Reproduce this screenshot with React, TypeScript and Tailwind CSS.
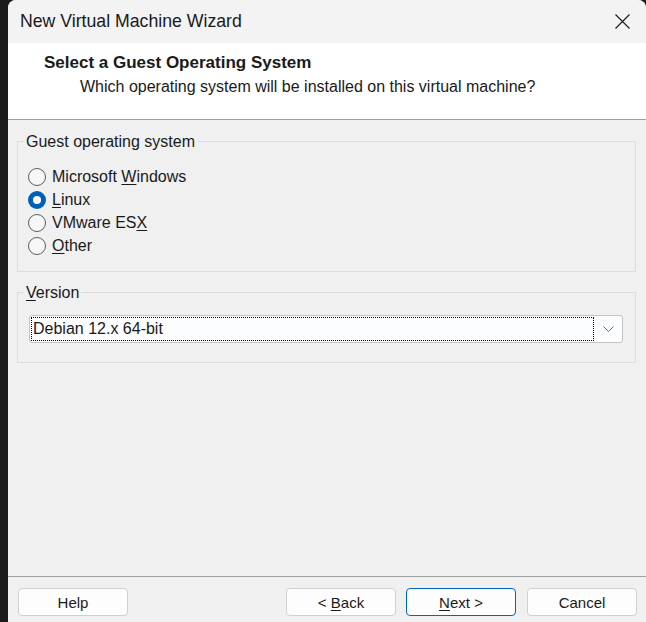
import React, { useState } from 'react';

// Radio button drawn like the Windows 11 one
const Radio = ({ checked }: { checked: boolean }) =>
  checked ? (
    <span className="w-[18px] h-[18px] rounded-full bg-[#005fb8] flex items-center justify-center shrink-0">
      <span className="w-[8px] h-[8px] rounded-full bg-white" />
    </span>
  ) : (
    <span className="w-[18px] h-[18px] rounded-full border border-[#5d5d5d] bg-[#f7f7f7] shrink-0" />
  );

const osList = [
  { id: 'win', pre: 'Microsoft ', key: 'W', post: 'indows' },
  { id: 'linux', pre: '', key: 'L', post: 'inux' },
  { id: 'esx', pre: 'VMware ES', key: 'X', post: '' },
  { id: 'other', pre: '', key: 'O', post: 'ther' },
];

const Button = ({ children, primary }: { children: React.ReactNode; primary?: boolean }) => (
  <button
    className={
      'w-[110px] h-[28px] rounded-[4px] bg-[#fdfdfd] text-[15px] leading-none text-[#1a1a1a] border ' +
      (primary ? 'border-[#0067c0]' : 'border-[#d0d0d0]')
    }
  >
    {children}
  </button>
);

export default function App() {
  const [os, setOs] = useState('linux');

  return (
    <div className="w-[646px] h-[622px] bg-[#1b1b1b] pl-[8px] overflow-hidden font-['Liberation_Sans',Arial,sans-serif] text-[#1a1a1a]">
      <div className="h-full flex flex-col bg-[#f0f0f0] rounded-t-[8px] overflow-hidden">
        {/* Title bar */}
        <div className="h-[43px] shrink-0 bg-[#f3f3f3] flex items-center justify-between pl-[12px] pr-[16px]">
          <span className="text-[17.7px] leading-none">New Virtual Machine Wizard</span>
          <svg width="15" height="15" viewBox="0 0 15 15" fill="none">
            <path d="M0.5 0.5L14.5 14.5M14.5 0.5L0.5 14.5" stroke="#1a1a1a" strokeWidth="1.1" />
          </svg>
        </div>

        {/* Header */}
        <div className="h-[77px] shrink-0 bg-white border-b border-[#a0a0a0] pt-[10px]">
          <div className="pl-[36px] text-[17px] leading-[20px] font-bold">Select a Guest Operating System</div>
          <div className="pl-[72px] mt-[4px] text-[16px] leading-[20px]">
            Which operating system will be installed on this virtual machine?
          </div>
        </div>

        {/* Body */}
        <div className="flex-1 flex flex-col pt-[10px] pl-[9px] pr-[10px]">
          <fieldset className="border border-[#dcdcdc] px-[6px] pt-[13px] pb-[14px]">
            <legend className="px-[2px] pt-[2px] text-[16px] leading-[20px]">Guest operating system</legend>
            <div className="pl-[4px] flex flex-col">
              {osList.map((o) => (
                <label key={o.id} className="h-[23px] flex items-center gap-[6px] text-[16px]" onClick={() => setOs(o.id)}>
                  <Radio checked={os === o.id} />
                  <span>
                    {o.pre}
                    <u className="underline-offset-[2px]">{o.key}</u>
                    {o.post}
                  </span>
                </label>
              ))}
            </div>
          </fieldset>

          <fieldset className="mt-[9px] border border-[#dcdcdc] px-[6px] pt-[12px] pb-[19px]">
            <legend className="px-[2px] pt-[2px] text-[16px] leading-[20px]">
              <u className="underline-offset-[2px]">V</u>ersion
            </legend>
            <div className="pl-[5px] pr-[6px]">
              <div className="h-[28px] flex items-center bg-[#fcfdfe] border border-[#c4c4c4] rounded-[3px] pl-[1px]">
                <div className="h-[24px] flex-1 border border-dotted border-black flex items-center pl-[1px] text-[16px]">
                  Debian 12.x 64-bit
                </div>
                <div className="w-[28px] flex justify-center">
                  <svg width="11" height="6" viewBox="0 0 11 6" fill="none">
                    <path d="M0.5 0.5L5.5 5.5L10.5 0.5" stroke="#6b6b6b" strokeWidth="1" />
                  </svg>
                </div>
              </div>
            </div>
          </fieldset>

          {/* Footer */}
          <div className="mt-auto -ml-[9px] -mr-[10px] border-t border-[#a0a0a0] pt-[11px] pb-[6px] pl-[10px] pr-[9px] flex items-center">
            <Button>Help</Button>
            <div className="ml-auto flex gap-[10px]">
              <Button>
                &lt; <u className="underline-offset-[2px]">B</u>ack
              </Button>
              <Button primary>
                <u className="underline-offset-[2px]">N</u>ext &gt;
              </Button>
              <div className="ml-[1px]">
                <Button>Cancel</Button>
              </div>
            </div>
          </div>
        </div>
      </div>
    </div>
  );
}
